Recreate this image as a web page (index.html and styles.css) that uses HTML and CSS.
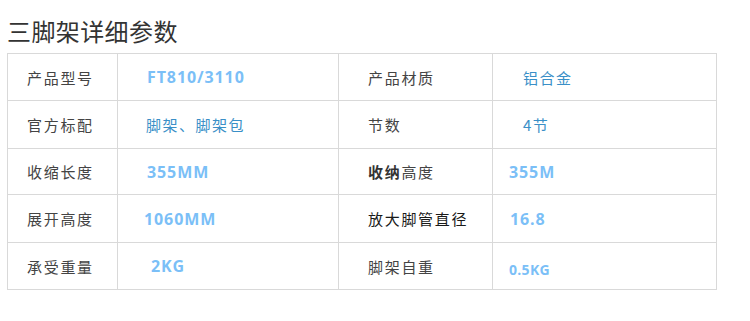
FILE: index.html
```html
<!DOCTYPE html>
<html lang="zh">
<head>
<meta charset="utf-8">
<link rel="stylesheet" href="styles.css">
</head>
<body>
<div class="page">
  <h1 class="title">三脚架详细参数</h1>
  <table class="spec">
    <tr>
      <td class="label">产品型号</td>
      <td class="val num pl30">FT810/3110</td>
      <td class="label r">产品材质</td>
      <td class="val cn pl31">铝合金</td>
    </tr>
    <tr>
      <td class="label">官方标配</td>
      <td class="val cn pl28">脚架、脚架包</td>
      <td class="label r">节数</td>
      <td class="val cn pl31">4节</td>
    </tr>
    <tr>
      <td class="label">收缩长度</td>
      <td class="val num pl29">355MM</td>
      <td class="label r"><b>收纳</b>高度</td>
      <td class="val num pl16">355M</td>
    </tr>
    <tr>
      <td class="label">展开高度</td>
      <td class="val num pl26">1060MM</td>
      <td class="label r strong">放大脚管直径</td>
      <td class="val num pl17">16.8</td>
    </tr>
    <tr>
      <td class="label">承受重量</td>
      <td class="val num pl33">2KG</td>
      <td class="label r">脚架自重</td>
      <td class="val num small pl16">0.5KG</td>
    </tr>
  </table>
</div>
</body>
</html>
```
FILE: styles.css
```css
* { box-sizing: border-box; }
html, body { margin: 0; padding: 0; background: #fff; }
body { font-family: "Noto Sans CJK SC", "Noto Sans", sans-serif; color: #333; }
.page { padding: 14px 0 0 7px; width: 750px; height: 321px; }
.title {
  margin: 0 0 5px 0;
  font-size: 24px;
  font-weight: 400;
  line-height: 34px;
  letter-spacing: 0.4px;
  color: #333;
}
.spec {
  border-collapse: collapse;
  border: 1px solid #b5b5b5;
  table-layout: fixed;
  width: 709px;
}
.spec tr { height: 47px; }
.spec tr:nth-child(2), .spec tr:nth-child(4) { height: 48px; }
.spec tr:nth-child(3) { height: 46px; }
.spec td { border: 1px solid #d9d9d9; padding: 0; vertical-align: middle; }
.spec td:nth-child(1) { width: 110px; }
.spec td:nth-child(2) { width: 221px; }
.spec td:nth-child(3) { width: 154px; }
.spec td:nth-child(4) { width: 224px; }
.label {
  padding-left: 19px !important;
  font-size: 15px;
  letter-spacing: 1.7px;
  color: #444;
}
.label.r { padding-left: 29px !important; }
.label b { font-weight: 700; color: #333; }
.label.strong { font-weight: 400; color: #1a1a1a; }
.val.num {
  font-family: "Open Sans", "Noto Sans", sans-serif;
  font-weight: 700;
  font-size: 16px;
  letter-spacing: 0.9px;
  color: #7bbff7;
}
.val.small { font-size: 14px; letter-spacing: 0.3px; padding-top: 6px !important; }
.val.cn {
  font-size: 15px;
  letter-spacing: 1.5px;
  color: #3a8fc7;
}
.pl16 { padding-left: 16px !important; }
.pl17 { padding-left: 17px !important; }
.pl26 { padding-left: 26px !important; }
.pl28 { padding-left: 28px !important; }
.pl29 { padding-left: 29px !important; }
.pl30 { padding-left: 29px !important; }
.pl31 { padding-left: 30px !important; }
.pl33 { padding-left: 33px !important; }
```
